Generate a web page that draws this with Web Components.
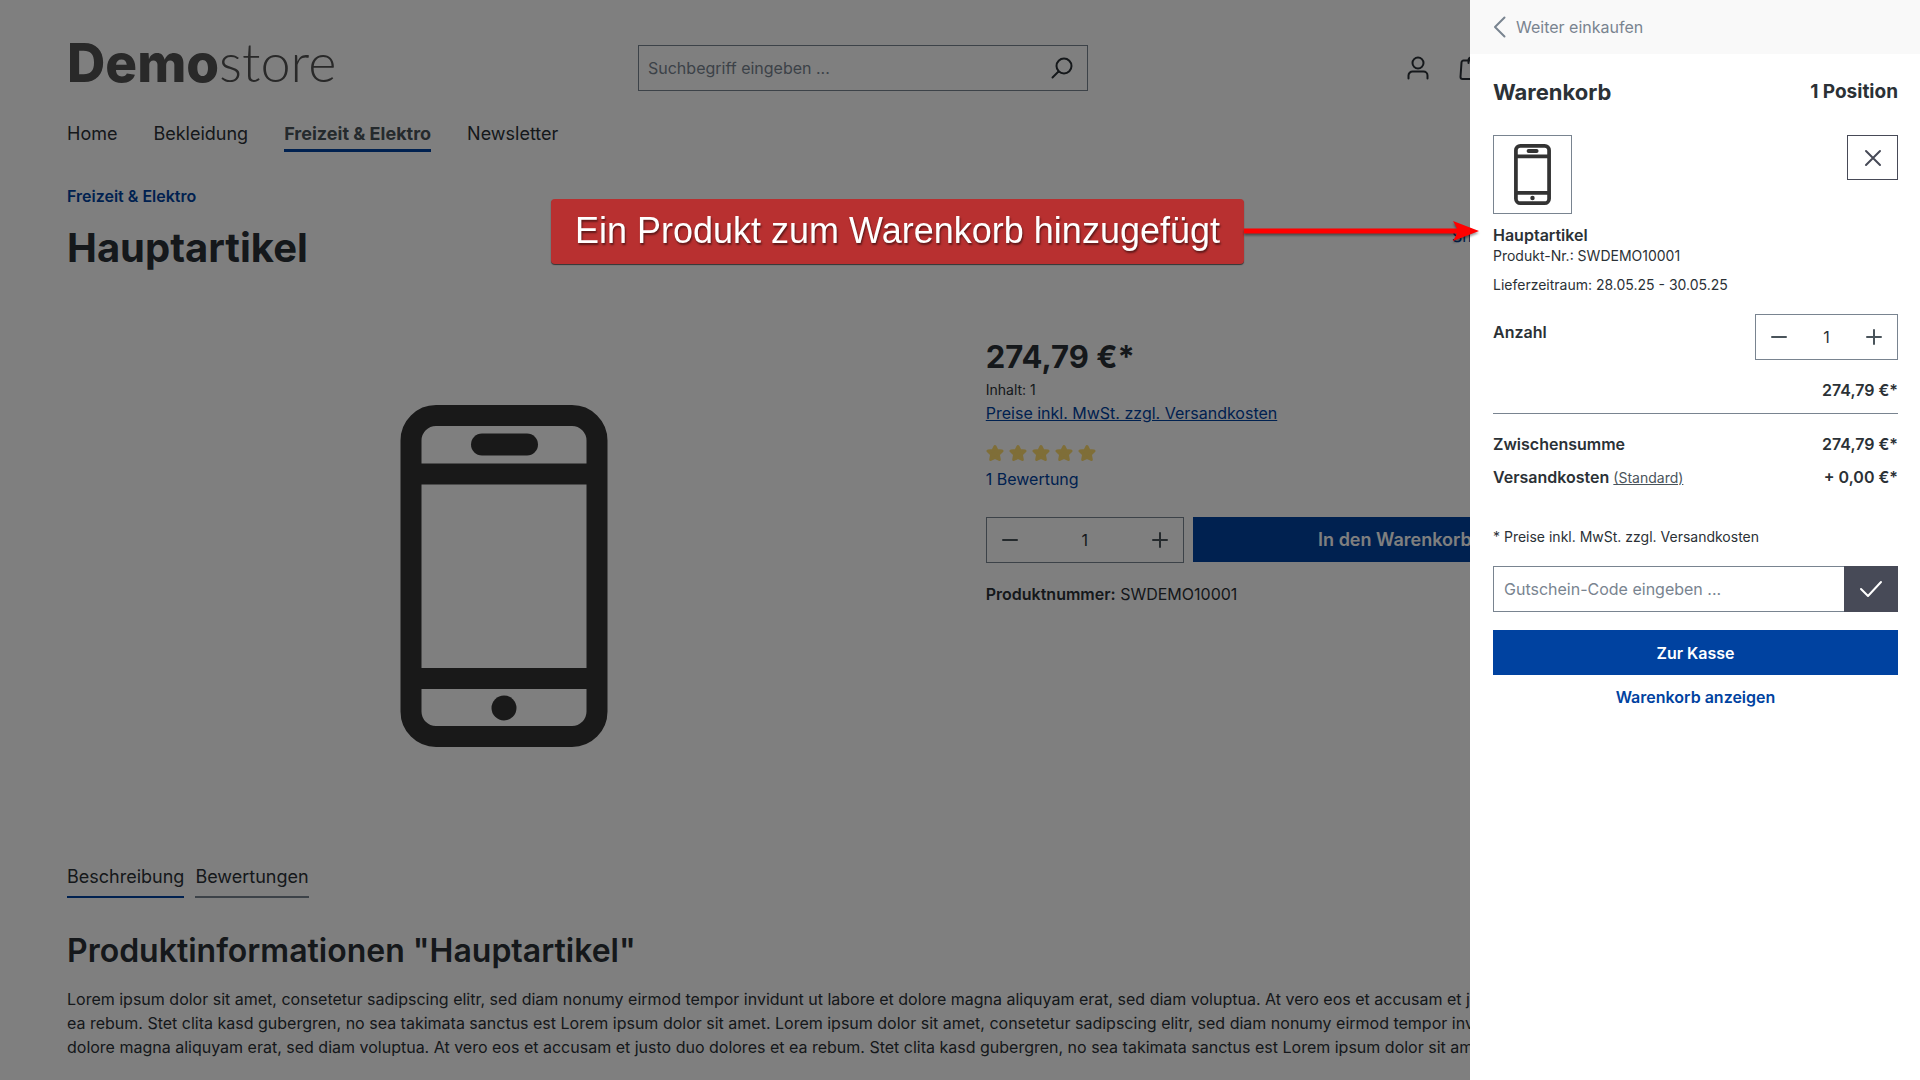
<!DOCTYPE html>
<html lang="de">
<head>
<meta charset="utf-8">
<meta name="viewport" content="width=device-width, initial-scale=1">
<title>Hauptartikel | Demostore</title>
<style>
  body {
    margin: 0;
    height: 100vh;
    overflow: hidden;
    background: #fff;
    color: #2b3136;
    font-family: Inter, "Liberation Sans", sans-serif;
    font-size: 16px;
    line-height: 24px;
  }
</style>
</head>
<body>
<store-page>
  <store-header slot="header"></store-header>
  <store-nav slot="header"></store-nav>
  <product-detail></product-detail>
  <product-tabs></product-tabs>
</store-page>
<cart-drawer></cart-drawer>
<callout-note>Ein Produkt zum Warenkorb hinzugefügt</callout-note>

<script>
const base = `
  * { box-sizing: border-box; }
  h1, h2, h3, p, ul, dl, dd { margin: 0; padding: 0; }
  button, input { font: inherit; color: inherit; border-radius: 0; margin: 0; }
  button { cursor: pointer; }
  svg { display: block; flex: none; }
  a { color: #0042a0; text-decoration: none; }
`;

function define(name, html) {
  customElements.define(name, class extends HTMLElement {
    constructor() {
      super();
      this.attachShadow({ mode: 'open' });
      this.shadowRoot.innerHTML = html;
    }
  });
}

define('phone-image', `
  <style>
    :host { display: block; }
    svg { display: block; width: 100%; height: 100%; }
  </style>
  <svg viewBox="0 0 207 342" fill="none" stroke="#333" role="img" aria-label="Hauptartikel">
    <rect x="10.5" y="10.5" width="186" height="321" rx="25" stroke-width="21"/>
    <path d="M10 69h187M10 273.500h187" stroke-width="21"/>
    <path d="M81.500 39.500h45" stroke-width="22" stroke-linecap="round"/>
    <circle cx="103.500" cy="303" r="12.500" fill="#333" stroke="none"/>
  </svg>
`);

class QuantityField extends HTMLElement {
  constructor() {
    super();
    this.attachShadow({ mode: 'open' });
  }

  connectedCallback() {
    this.shadowRoot.innerHTML = `
      <style>
        ${base}
        :host { display: block; }
        .group { display: flex; height: 46px; border: 1px solid #798490; background: #fff; }
        button {
          display: flex;
          align-items: center;
          justify-content: center;
          width: 46px;
          padding: 0;
          border: 0;
          background: none;
          color: #4a545b;
        }
        input {
          flex: 1;
          min-width: 0;
          padding: 0;
          border: 0;
          background: none;
          text-align: center;
        }
      </style>
      <div class="group">
        <button type="button" aria-label="Anzahl verringern">
          <svg width="16" height="16" stroke="currentColor" stroke-width="2" stroke-linecap="round"><path d="M1 8h14"/></svg>
        </button>
        <input type="text" inputmode="numeric" value="1" aria-label="Anzahl">
        <button type="button" aria-label="Anzahl erhöhen">
          <svg width="16" height="16" stroke="currentColor" stroke-width="2" stroke-linecap="round"><path d="M1 8h14M8 1v14"/></svg>
        </button>
      </div>
    `;
    const input = this.shadowRoot.querySelector('input');
    const [minus, plus] = this.shadowRoot.querySelectorAll('button');
    minus.addEventListener('click', () => { input.value = Math.max(1, Number(input.value) - 1); });
    plus.addEventListener('click', () => { input.value = Number(input.value) + 1; });
  }
}
customElements.define('quantity-field', QuantityField);

define('store-page', `
  <style>
    ${base}
    :host { display: block; }
    .container { max-width: 1597px; padding: 32px 0 0 67px; }
    .backdrop { position: fixed; inset: 0; background: rgba(0, 0, 0, 0.5); }
  </style>
  <div class="container">
    <header><slot name="header"></slot></header>
    <main><slot></slot></main>
  </div>
  <div class="backdrop"></div>
`);

define('store-header', `
  <style>
    ${base}
    :host {
      display: grid;
      grid-template-columns: 571px 450px 1fr;
      align-items: center;
      height: 72px;
    }
    .logo {
      align-self: start;
      color: #525252;
      font-family: Lato, "Open Sans", sans-serif;
      font-size: 54px;
      font-weight: 300;
      line-height: 60px;
    }
    .logo b { font-family: Inter, sans-serif; font-size: 53px; font-weight: 800; }
    .search { display: flex; height: 46px; border: 1px solid #798490; }
    .search input {
      flex: 1;
      min-width: 0;
      padding: 0 9px;
      border: 0;
      background: none;
    }
    .search input::placeholder { color: #798490; opacity: 1; }
    .search button { width: 48px; padding: 0 12px; border: 0; background: none; }
    .actions { display: flex; justify-content: flex-end; gap: 28px; padding-right: 113px; }
    .actions button { padding: 0; border: 0; background: none; }
  </style>
  <a class="logo" href="#"><b>Demo</b>store</a>
  <form class="search">
    <input type="search" placeholder="Suchbegriff eingeben ..." aria-label="Suchbegriff">
    <button type="button" aria-label="Suchen">
      <svg width="22" height="22" viewBox="0 0 22 22" fill="none" stroke="#2b3136" stroke-width="2" stroke-linecap="round">
        <circle cx="13" cy="9" r="7.500"/><path d="M7.500 14.500L1.500 20.500"/>
      </svg>
    </button>
  </form>
  <div class="actions">
    <button type="button" aria-label="Ihr Konto">
      <svg width="24" height="24" viewBox="0 0 24 24" fill="none" stroke="#2b3136" stroke-width="2" stroke-linecap="round">
        <circle cx="12" cy="7" r="5.500"/><path d="M2.500 22.500v-3a4 4 0 0 1 4-4h11a4 4 0 0 1 4 4v3"/>
      </svg>
    </button>
    <button type="button" aria-label="Warenkorb">
      <svg width="26" height="26" viewBox="0 0 26 26" fill="none" stroke="#2b3136" stroke-width="2" stroke-linecap="round">
        <path d="M5.500 5.500h15a2 2 0 0 1 2 2l1 14.500a2 2 0 0 1-2 2h-17a2 2 0 0 1-2-2l1-14.500a2 2 0 0 1 2-2zM10.500 8V5.500a3 3 0 0 1 6 0V8"/>
      </svg>
    </button>
  </div>
`);

define('store-nav', `
  <style>
    ${base}
    :host { display: block; margin-top: 17px; }
    nav { display: flex; gap: 36px; font-size: 18px; line-height: 26px; }
    a { padding-bottom: 2px; border-bottom: 3px solid transparent; color: #2b3136; }
    a[aria-current] { border-color: #0042a0; color: #4a545b; font-weight: 700; }
  </style>
  <nav>
    <a href="#">Home</a>
    <a href="#">Bekleidung</a>
    <a href="#" aria-current="page">Freizeit &amp; Elektro</a>
    <a href="#">Newsletter</a>
  </nav>
`);

define('star-rating', `
  <style>
    :host { display: flex; gap: 5px; }
    svg { display: block; }
  </style>
  ${'<svg width="18" height="18" viewBox="0 0 18 18" fill="#ffdc70" stroke="#ffdc70" stroke-width="3" stroke-linejoin="round"><path d="M9 2.500l2 3.900 5 .6-3.600 3.500.9 5L9 13.500l-4.300 2 .9-5L2 7l5-.6z"/></svg>'.repeat(5)}
`);

define('product-detail', `
  <style>
    ${base}
    :host { display: block; padding-top: 32px; }
    .breadcrumb { font-weight: 600; }
    .breadcrumb a { display: block; }
    .heading { display: flex; align-items: center; justify-content: space-between; margin-top: 16px; }
    h1 { color: #2b3136; font-size: 40px; line-height: 48px; font-weight: 700; }
    .maker { align-self: flex-start; min-width: 145px; }
    .main { display: grid; grid-template-columns: repeat(12, 1fr); gap: 45px; margin: 62px 0 45px; }
    .gallery { grid-column: span 7; display: flex; justify-content: center; align-items: center; height: 484px; }
    phone-image { width: 208px; height: 342px; }
    .buy { grid-column: span 5; padding-top: 3px; }
    .price { font-size: 31px; line-height: 40px; font-weight: 700; }
    .unit { margin-top: 2px; font-size: 14px; line-height: 22px; }
    .tax a { text-decoration: underline; }
    star-rating { margin: 19px 0 5px; }
    .order { display: grid; grid-template-columns: 198px 1fr; gap: 9px; margin-top: 26px; }
    .order button {
      height: 45px;
      border: 0;
      background: #0042a0;
      color: #fff;
      font-size: 18px;
      font-weight: 600;
    }
    .number { margin-top: 19px; }
    .number b { font-weight: 600; }
  </style>
  <nav class="breadcrumb" aria-label="Brotkrumen"><a href="#">Freizeit &amp; Elektro</a></nav>
  <div class="heading">
    <h1>Hauptartikel</h1>
    <a class="maker" href="#">Shopware Freizeit</a>
  </div>
  <div class="main">
    <div class="gallery"><phone-image></phone-image></div>
    <div class="buy">
      <p class="price">274,79 €*</p>
      <p class="unit">Inhalt: 1</p>
      <p class="tax"><a href="#">Preise inkl. MwSt. zzgl. Versandkosten</a></p>
      <star-rating></star-rating>
      <a href="#">1 Bewertung</a>
      <div class="order">
        <quantity-field></quantity-field>
        <button type="button">In den Warenkorb</button>
      </div>
      <p class="number"><b>Produktnummer:</b> SWDEMO10001</p>
    </div>
  </div>
`);

define('product-tabs', `
  <style>
    ${base}
    :host { display: block; }
    .tabs { display: flex; gap: 11px; font-size: 18px; line-height: 28px; }
    .tabs a { padding-bottom: 5px; border-bottom: 2px solid #798490; color: #2b3136; }
    .tabs a[aria-selected="true"] { border-color: #0042a0; }
    h2 { margin-top: 33px; font-size: 32px; line-height: 40px; font-weight: 600; }
    p { margin-top: 16px; white-space: nowrap; }
  </style>
  <div class="tabs" role="tablist">
    <a href="#" role="tab" aria-selected="true">Beschreibung</a>
    <a href="#" role="tab" aria-selected="false">Bewertungen</a>
  </div>
  <h2>Produktinformationen "Hauptartikel"</h2>
  <p>
    Lorem ipsum dolor sit amet, consetetur sadipscing elitr, sed diam nonumy eirmod tempor invidunt ut labore et dolore magna aliquyam erat, sed diam voluptua. At vero eos et accusam et justo duo dolores et<br>
    ea rebum. Stet clita kasd gubergren, no sea takimata sanctus est Lorem ipsum dolor sit amet. Lorem ipsum dolor sit amet, consetetur sadipscing elitr, sed diam nonumy eirmod tempor invidunt ut labore et<br>
    dolore magna aliquyam erat, sed diam voluptua. At vero eos et accusam et justo duo dolores et ea rebum. Stet clita kasd gubergren, no sea takimata sanctus est Lorem ipsum dolor sit amet.
  </p>
`);

define('cart-item', `
  <style>
    ${base}
    :host { display: block; padding-bottom: 11px; border-bottom: 1px solid #798490; }
    .row { display: flex; justify-content: space-between; align-items: flex-start; }
    .thumb { padding: 8px 19px; height: 79px; width: 79px; border: 1px solid #798490; }
    phone-image { height: 61px; }
    .remove {
      display: flex;
      align-items: center;
      justify-content: center;
      width: 51px;
      height: 45px;
      padding: 0;
      border: 1px solid #474a57;
      background: #fff;
    }
    .name { display: block; margin-top: 10px; color: #2b3136; font-weight: 600; line-height: 22px; }
    .info { font-size: 14px; line-height: 20px; }
    .delivery { margin-top: 9px; font-size: 14px; line-height: 20px; }
    .amount { margin-top: 19px; }
    .amount label { padding-top: 6px; font-weight: 600; }
    quantity-field { width: 143px; }
    .price { margin-top: 18px; text-align: right; font-weight: 600; }
  </style>
  <div class="row">
    <a class="thumb" href="#"><phone-image></phone-image></a>
    <button class="remove" type="button" aria-label="Entfernen">
      <svg width="18" height="18" viewBox="0 0 18 18" stroke="#474a57" stroke-width="2" stroke-linecap="round"><path d="M2 2l14 14M16 2L2 16"/></svg>
    </button>
  </div>
  <a class="name" href="#">Hauptartikel</a>
  <p class="info">Produkt-Nr.: SWDEMO10001</p>
  <p class="delivery">Lieferzeitraum: 28.05.25 - 30.05.25</p>
  <div class="row amount">
    <label>Anzahl</label>
    <quantity-field></quantity-field>
  </div>
  <p class="price">274,79 €*</p>
`);

define('cart-drawer', `
  <style>
    ${base}
    :host {
      position: fixed;
      top: 0;
      right: 0;
      bottom: 0;
      width: 450px;
      background: #fff;
    }
    .back {
      display: flex;
      align-items: center;
      gap: 10px;
      width: 100%;
      height: 54px;
      padding: 0 23px;
      border: 0;
      background: #f9f9f9;
      color: #798490;
    }
    .body { padding: 24px 22px 0 23px; }
    .title { display: flex; justify-content: space-between; align-items: center; margin-bottom: 29px; }
    h2 { font-size: 22px; line-height: 28px; font-weight: 700; }
    .count { font-size: 19px; font-weight: 700; }
    dl { display: grid; grid-template-columns: 1fr auto; row-gap: 9px; margin-top: 18px; font-weight: 600; }
    dd { text-align: right; }
    dt a { color: #4a545b; font-size: 14px; font-weight: 400; text-decoration: underline; }
    .tax { margin-top: 35px; font-size: 14px; }
    .promo { display: flex; height: 46px; margin-top: 17px; }
    .promo input { flex: 1; min-width: 0; padding: 0 10px; border: 1px solid #798490; border-right: 0; }
    .promo input::placeholder { color: #798490; opacity: 1; }
    .promo button {
      display: flex;
      align-items: center;
      justify-content: center;
      width: 54px;
      padding: 0;
      border: 0;
      background: #474a57;
    }
    .checkout {
      width: 100%;
      height: 45px;
      margin-top: 18px;
      border: 0;
      background: #0042a0;
      color: #fff;
      font-weight: 600;
    }
    .show { display: block; margin-top: 10px; text-align: center; font-weight: 600; }
  </style>
  <button class="back" type="button">
    <svg width="13" height="22" viewBox="0 0 13 22" fill="none" stroke="#798490" stroke-width="2" stroke-linecap="round" stroke-linejoin="round"><path d="M11.500 1.500L2 11l9.500 9.500"/></svg>
    Weiter einkaufen
  </button>
  <div class="body">
    <div class="title">
      <h2>Warenkorb</h2>
      <span class="count">1 Position</span>
    </div>
    <cart-item></cart-item>
    <dl>
      <dt>Zwischensumme</dt>
      <dd>274,79 €*</dd>
      <dt>Versandkosten <a href="#">(Standard)</a></dt>
      <dd>+ 0,00 €*</dd>
    </dl>
    <p class="tax">* Preise inkl. MwSt. zzgl. Versandkosten</p>
    <form class="promo">
      <input type="text" placeholder="Gutschein-Code eingeben ..." aria-label="Gutschein-Code">
      <button type="button" aria-label="Gutschein einlösen">
        <svg width="24" height="18" viewBox="0 0 24 18" fill="none" stroke="#fff" stroke-width="2" stroke-linecap="round" stroke-linejoin="round"><path d="M2 9l7 7L22 2"/></svg>
      </button>
    </form>
    <button class="checkout" type="button">Zur Kasse</button>
    <a class="show" href="#">Warenkorb anzeigen</a>
  </div>
`);

// Label and arrow that point at the open cart
define('callout-note', `
  <style>
    :host {
      position: absolute;
      top: 199px;
      right: 441px;
      display: flex;
      align-items: center;
    }
    .label {
      padding: 11px 24px 13px;
      border-radius: 4px;
      background: #b83030;
      box-shadow: 0 1px 1px rgba(0, 0, 0, 0.6);
      color: #fff;
      font-family: "Liberation Sans", Arial, sans-serif;
      font-size: 36px;
      line-height: 41px;
      text-shadow: 1px 2px 2px rgba(0, 0, 0, 0.5);
      white-space: nowrap;
    }
    svg { display: block; filter: drop-shadow(0 2px 1px rgba(0, 0, 0, 0.4)); }
  </style>
  <span class="label"><slot></slot></span>
  <svg width="235" height="24" viewBox="0 0 235 24" fill="#f00"><path d="M0 8.500h213L209 1l26 10-26 10 4-7.500H0z"/></svg>
`);
</script>
</body>
</html>
